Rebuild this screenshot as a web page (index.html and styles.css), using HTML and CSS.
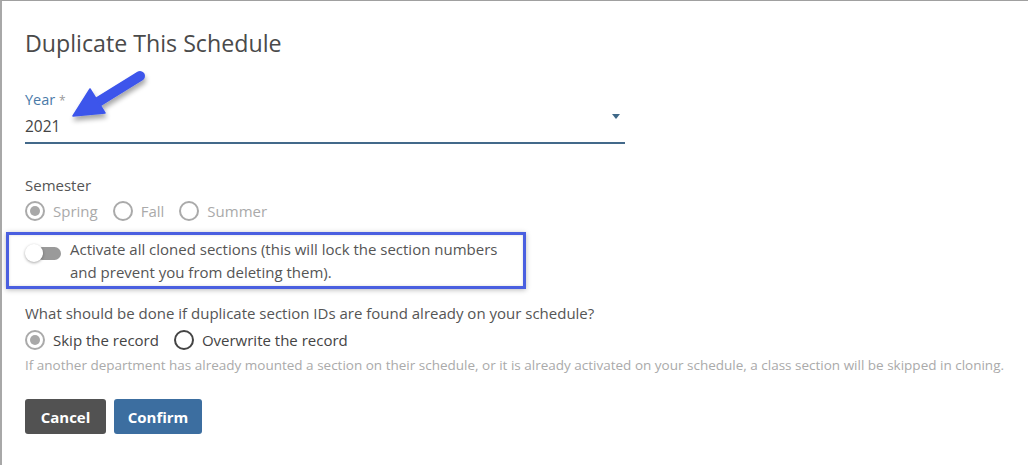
FILE: index.html
```html
<!DOCTYPE html>
<html lang="en">
<head>
<meta charset="utf-8">
<title>Duplicate This Schedule</title>
<link rel="stylesheet" href="styles.css">
</head>
<body>
<div class="modal">
  <h1 class="title">Duplicate This Schedule</h1>

  <div class="field">
    <div class="field-label">Year <span class="req">*</span></div>
    <div class="select">
      <span class="select-value">2021</span>
      <span class="caret"></span>
    </div>
  </div>

  <div class="group">
    <div class="group-label">Semester</div>
    <div class="radios disabled">
      <label class="radio checked"><span class="dot"></span>Spring</label>
      <label class="radio"><span class="dot"></span>Fall</label>
      <label class="radio"><span class="dot"></span>Summer</label>
    </div>
  </div>

  <div class="highlight">
    <span class="toggle"><span class="knob"></span></span>
    <p class="toggle-text">Activate all cloned sections (this will lock the section numbers<br>and prevent you from deleting them).</p>
  </div>

  <div class="group group-dup">
    <div class="group-label">What should be done if duplicate section IDs are found already on your schedule?</div>
    <div class="radios">
      <label class="radio checked muted"><span class="dot"></span>Skip the record</label>
      <label class="radio"><span class="dot"></span>Overwrite the record</label>
    </div>
    <p class="help">If another department has already mounted a section on their schedule, or it is already activated on your schedule, a class section will be skipped in cloning.</p>
  </div>

  <div class="actions">
    <button class="btn btn-cancel">Cancel</button>
    <button class="btn btn-confirm">Confirm</button>
  </div>

  <svg class="annotation-arrow" width="100" height="75" viewBox="0 0 100 75">
    <defs>
      <filter id="sh" x="-30%" y="-30%" width="160%" height="160%">
        <feGaussianBlur in="SourceAlpha" stdDeviation="2.5"/>
        <feOffset dx="1" dy="4" result="b"/>
        <feComponentTransfer><feFuncA type="linear" slope="0.35"/></feComponentTransfer>
        <feMerge><feMergeNode/><feMergeNode in="SourceGraphic"/></feMerge>
      </filter>
    </defs>
    <g filter="url(#sh)" fill="#3c55eb" stroke="#3c55eb">
      <line x1="78" y1="16" x2="36" y2="42" stroke-width="10" stroke-linecap="round"/>
      <polygon points="11,56 28,29 43,53" stroke-width="1.5" stroke-linejoin="round"/>
    </g>
  </svg>
</div>
</body>
</html>
```

FILE: styles.css
```css
* { box-sizing: border-box; }

html, body {
  margin: 0;
  padding: 0;
  background: #ffffff;
}

body {
  font-family: "Open Sans", Lato, Arial, sans-serif;
  color: #505050;
}

.modal {
  position: relative;
  min-height: 465px;
  border-top: 1px solid #a0a0a0;
  border-left: 2px solid #a8a8a8;
  padding: 0 0 0 23px;
  overflow: hidden;
}

.title {
  margin: 27px 0 0;
  font-size: 23.2px;
  line-height: 30px;
  font-weight: 400;
  color: #4a4a4a;
}

.field {
  margin-top: 33px;
  width: 600px;
}

.field-label {
  font-size: 14.5px;
  line-height: 18px;
  color: #4a7aa8;
}

.req { color: #999; font-size: 12px; }

.select {
  display: flex;
  align-items: center;
  justify-content: space-between;
  height: 34px;
  border-bottom: 2px solid #43698a;
  padding-right: 5px;
}

.select-value {
  font-size: 15.5px;
  color: #444;
}

.caret {
  width: 0;
  height: 0;
  border-left: 4.5px solid transparent;
  border-right: 4.5px solid transparent;
  border-top: 5px solid #3f6888;
  margin-top: -20px;
}

.group { margin-top: 31px; }

.group-label {
  font-size: 15px;
  line-height: 20px;
  color: #555;
}

.radios {
  display: flex;
  gap: 15px;
  margin-top: 5px;
  height: 22px;
  align-items: center;
}

.radio {
  display: flex;
  align-items: center;
  gap: 8px;
  font-size: 15px;
  color: #444;
}

.dot {
  width: 20px;
  height: 20px;
  border-radius: 50%;
  border: 2px solid #444;
  display: inline-flex;
  align-items: center;
  justify-content: center;
}

.radio.checked .dot::after {
  content: "";
  width: 10px;
  height: 10px;
  border-radius: 50%;
  background: #a8a8a8;
}

.radios.disabled .radio { color: #aaa; }
.radios.disabled .dot { border-color: #aaa; }

.radio.muted .dot { border-color: #aaa; }
.radio.muted { color: #444; }

.highlight {
  margin: 10px 0 0 -19px;
  width: 520px;
  height: 57px;
  border: 3px solid #4a5fe0;
  box-shadow: 0 1px 5px rgba(0, 0, 0, 0.28), inset 0 0 3px rgba(0, 0, 0, 0.15);
  display: flex;
  align-items: flex-start;
  padding: 3px 0 0 16px;
}

.toggle {
  position: relative;
  flex: none;
  width: 36px;
  height: 18px;
  margin-top: 6px;
  display: flex;
  align-items: center;
}

.toggle::before {
  content: "";
  display: block;
  margin-left: 11px;
  width: 25px;
  height: 13px;
  border-radius: 7px;
  background: #9a9a9a;
}

.knob {
  position: absolute;
  left: 0;
  top: 0;
  width: 18px;
  height: 18px;
  border-radius: 50%;
  background: #fff;
  box-shadow: 0 1px 3px rgba(0, 0, 0, 0.35);
}

.toggle-text {
  margin: 0 0 0 9px;
  font-size: 15px;
  line-height: 23px;
  color: #555;
}

.group-dup { margin-top: 14px; }

.group-dup .radios { margin-top: 6px; }

.help {
  margin: 5px 0 0;
  font-size: 13.5px;
  line-height: 18px;
  color: #aaa;
  white-space: nowrap;
}

.actions {
  display: flex;
  gap: 8px;
  margin-top: 25px;
}

.btn {
  height: 35px;
  border: none;
  border-radius: 3px;
  color: #fff;
  font-family: inherit;
  font-size: 15px;
  font-weight: 700;
  padding: 0;
}

.btn-cancel { background: #525252; width: 81px; }
.btn-confirm { background: #3c6ea0; width: 88px; }

.annotation-arrow {
  position: absolute;
  left: 60px;
  top: 59px;
}
```
